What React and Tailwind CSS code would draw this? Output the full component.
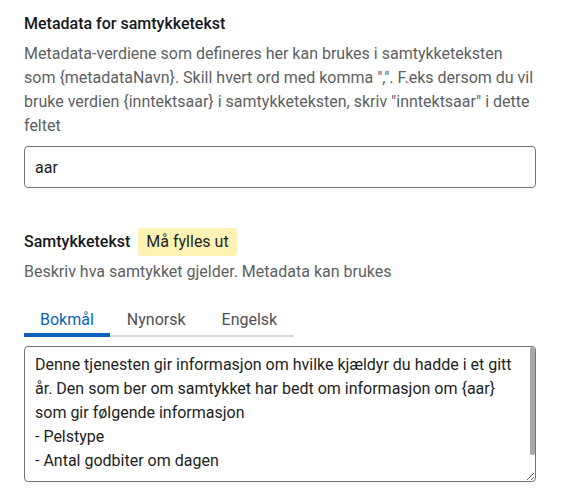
import { useState } from "react";

const tabs = [
  { id: "nb", label: "Bokmål", pad: "pl-4 pr-4" },
  { id: "nn", label: "Nynorsk", pad: "pl-[17px] pr-[18px]" },
  { id: "en", label: "Engelsk", pad: "pl-[18px] pr-[17px]" },
];

const metadataHelp =
  'Metadata-verdiene som defineres her kan brukes i samtykketeksten som {metadataNavn}. Skill hvert ord med komma ",". F.eks dersom du vil bruke verdien {inntektsaar} i samtykketeksten, skriv "inntektsaar" i dette feltet';

const defaultText =
  "Denne tjenesten gir informasjon om hvilke kjældyr du hadde i et gitt år. Den som ber om samtykket har bedt om informasjon om {aar} som gir følgende informasjon\n- Pelstype\n- Antal godbiter om dagen\n\n";

const App = () => {
  const [activeTab, setActiveTab] = useState("nb");
  const [metadata, setMetadata] = useState("aar");
  const [text, setText] = useState(defaultText);

  return (
    <div className="min-h-screen w-full bg-white pl-6 pr-[26px] pt-3 font-['Roboto',sans-serif] text-base text-[#1c1e21]">
      {/* Metadata */}
      <h2 className="text-base font-medium leading-6 text-[#15181d]">Metadata for samtykketekst</h2>
      <p className="mt-[6px] leading-6 text-[#5d5f63]">{metadataHelp}</p>
      <input
        type="text"
        value={metadata}
        onChange={(e) => setMetadata(e.target.value)}
        className="mt-2 block h-[42px] w-full rounded-[4px] border border-[#71757b] px-[10px] text-base text-[#1c1e21] outline-none"
      />

      {/* Samtykketekst */}
      <div className="mt-10 flex h-7 items-center gap-2">
        <span className="font-medium text-[#15181d]">Samtykketekst</span>
        <span className="flex h-7 items-center rounded-[3px] bg-[#fdf2b4] px-2 text-[#1c1e21]">Må fylles ut</span>
      </div>
      <p className="mt-1 leading-6 text-[#5d5f63]">Beskriv hva samtykket gjelder. Metadata kan brukes</p>

      <div className="mt-4 flex w-fit border-b-2 border-[#d5d6d8]">
        {tabs.map((tab) => (
          <button
            key={tab.id}
            type="button"
            onClick={() => setActiveTab(tab.id)}
            className={`-mb-[2px] border-b-4 pb-[1px] pt-2 leading-6 ${tab.pad} ${
              activeTab === tab.id ? "border-[#0a62bd] text-[#0a62bd]" : "border-transparent text-[#4f5156]"
            }`}
          >
            {tab.label}
          </button>
        ))}
      </div>

      <div className="relative mt-[9px]">
        <textarea
          value={text}
          onChange={(e) => setText(e.target.value)}
          className="block h-[136px] w-full resize-y rounded-[4px] border border-[#71757b] px-[10px] py-[6px] text-base leading-6 text-[#1c1e21] outline-none"
        />
        {/* scrollbar thumb (headless hides native scrollbars) */}
        <div className="pointer-events-none absolute right-[1px] top-[1px] h-[108px] w-[5px] rounded-[2px] bg-[#a8a8a8]" />
      </div>
    </div>
  );
};

export default App;
